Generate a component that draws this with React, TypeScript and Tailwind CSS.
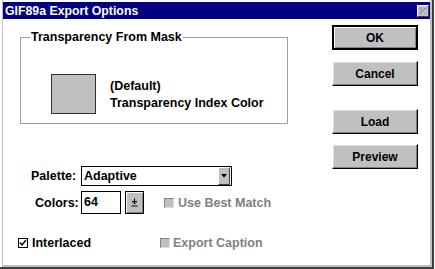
import React from "react";

const face = "bg-[#c0c0c0]";

function PushButton({ label, isDefault }: { label: string; isDefault?: boolean }) {
  return (
    <button
      className={`${face} w-[86px] h-[25px] flex items-center justify-center text-[12px] font-bold text-black ${
        isDefault
          ? "border-2 border-black shadow-[inset_1px_1px_#ffffff,inset_-1px_-1px_#808080]"
          : "border border-t-[#ffffff] border-l-[#ffffff] border-r-black border-b-black shadow-[inset_-1px_-1px_#808080,inset_1px_1px_#dfdfdf]"
      }`}
    >
      {label}
    </button>
  );
}

function CheckBox({ checked, disabled }: { checked?: boolean; disabled?: boolean }) {
  if (disabled) {
    return (
      <span className="w-[10px] h-[10px] shrink-0 bg-[#c0c0c0] border border-t-[#808080] border-l-[#808080] border-r-[#e0e0e0] border-b-[#e0e0e0]" />
    );
  }
  return (
    <span className="w-[10px] h-[10px] shrink-0 bg-white border border-black flex items-center justify-center">
      {checked && (
        <svg width="8" height="8" viewBox="0 0 8 8">
          <path d="M1 3.5 L3 6 L7 1" fill="none" stroke="black" strokeWidth="1.4" />
        </svg>
      )}
    </span>
  );
}

export default function App() {
  return (
    <div className="w-[435px] h-[269px] bg-white font-['Liberation_Sans',Arial,sans-serif] text-[12.5px] font-bold text-black leading-[14px]">
      <div className="w-[434px] h-[269px] border-r-2 border-b-2 border-[#404040]">
        <div className="h-full ml-[2px] border-l border-r-2 border-b-2 border-[#c0c0c0] pt-[2px] flex flex-col">
          {/* title bar */}
          <div className="h-[17px] bg-[#000080] flex items-center justify-between pl-[2px] pr-[1px]">
            <span className="text-white text-[12.3px] font-bold">GIF89a Export Options</span>
            <span className="w-[12px] h-[12px] bg-[#c0c0c0] border border-t-white border-l-white border-r-[#404040] border-b-[#404040] flex items-center justify-center">
              <svg width="8" height="8" viewBox="0 0 8 8">
                <path d="M1 1 L7 7 M7 1 L1 7" stroke="#808080" strokeWidth="1.3" />
                <path d="M2 1.8 L7.6 7.4 M7.6 1.8 L2 7.4" stroke="#ffffff" strokeWidth="0.6" />
              </svg>
            </span>
          </div>

          {/* body */}
          <div className="flex-1 flex pl-[17px]">
            <div className="w-[268px] flex flex-col">
              <fieldset className="mt-[11px] h-[94px] border border-[#a0a0a0]">
                <legend className="ml-[9px] px-[1px]">Transparency From Mask</legend>
                <div className="flex items-start mt-[30px] pl-[30px]">
                  <div className="w-[45px] h-[40px] bg-[#c0c0c0] border border-[#303030]" />
                  <div className="ml-[14px] mt-[5px] flex flex-col gap-[3px]">
                    <span>(Default)</span>
                    <span>Transparency Index Color</span>
                  </div>
                </div>
              </fieldset>

              {/* palette row */}
              <div className="flex items-center mt-[42px] h-[20px]">
                <span className="ml-[11px] w-[50px]">Palette:</span>
                <div className="w-[151px] h-[20px] bg-white border border-black flex items-center justify-between pl-[2px] pr-[1px]">
                  <span>Adaptive</span>
                  <span className="w-[12px] h-[18px] bg-[#c0c0c0] border border-t-white border-l-white border-r-[#404040] border-b-[#404040] flex items-center justify-center">
                    <svg width="6" height="4" viewBox="0 0 6 4">
                      <path d="M0 0 H6 L3 3.5 Z" fill="black" />
                    </svg>
                  </span>
                </div>
              </div>

              {/* colors row */}
              <div className="flex items-center mt-[5px] h-[23px]">
                <span className="ml-[15px] w-[46px]">Colors:</span>
                <div className="w-[40px] h-[23px] bg-white border border-black pl-[2px] pt-[3px] leading-[14px]">64</div>
                <span className="ml-[4px] w-[19px] h-[23px] bg-[#c0c0c0] border border-black shadow-[inset_1px_1px_#ffffff,inset_-1px_-1px_#808080] flex items-center justify-center">
                  <svg width="7" height="9" viewBox="0 0 7 9">
                    <path d="M3.5 0.5 V6" stroke="black" strokeWidth="1" />
                    <path d="M1 3.5 H6 M2 4.5 L3.5 6 L5 4.5" stroke="black" strokeWidth="1" fill="none" />
                    <path d="M0.5 8 H6.5" stroke="black" strokeWidth="1" />
                  </svg>
                </span>
                <span className="ml-[20px] flex items-center gap-[4px] text-[#808080]">
                  <CheckBox disabled />
                  <span>Use Best Match</span>
                </span>
              </div>

              {/* checkboxes row */}
              <div className="flex items-center mt-[22px] -ml-[2px]">
                <span className="flex items-center gap-[4px] w-[142px]">
                  <CheckBox checked />
                  <span>Interlaced</span>
                </span>
                <span className="flex items-center gap-[3px] text-[#808080]">
                  <CheckBox disabled />
                  <span>Export Caption</span>
                </span>
              </div>
            </div>

            {/* buttons */}
            <div className="ml-[44px] flex flex-col pt-[6px]">
              <PushButton label="OK" isDefault />
              <div className="mt-[11px]">
                <PushButton label="Cancel" />
              </div>
              <div className="mt-[23px]">
                <PushButton label="Load" />
              </div>
              <div className="mt-[10px]">
                <PushButton label="Preview" />
              </div>
            </div>
          </div>
        </div>
      </div>
    </div>
  );
}
